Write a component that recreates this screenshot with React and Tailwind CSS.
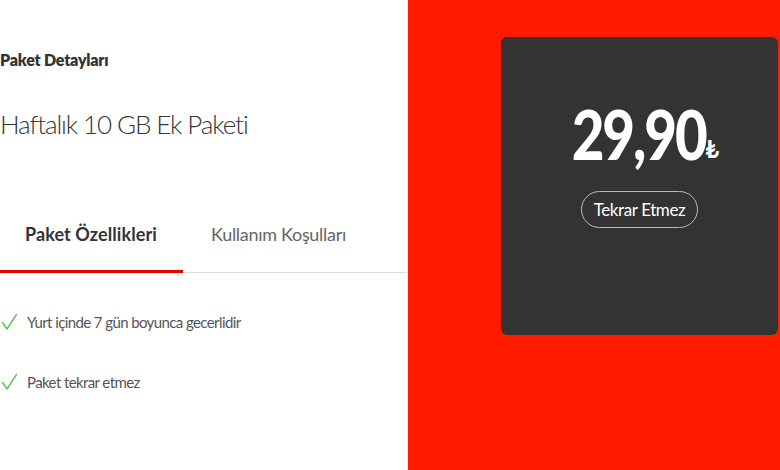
import React from 'react';

const Check = () => (
  <svg width="17" height="18" viewBox="0 0 17 18" fill="none" className="shrink-0">
    <path d="M1.5 9.5 L6 16 L15.5 1.5" stroke="#62c05a" strokeWidth="1.4" strokeLinecap="round" strokeLinejoin="round" />
  </svg>
);

const features = ['Yurt içinde 7 gün boyunca gecerlidir', 'Paket tekrar etmez'];

const App = () => {
  return (
    <div className="flex w-[780px] h-[470px] overflow-hidden bg-white" style={{ fontFamily: 'Lato, "Open Sans", sans-serif' }}>
      {/* Left: package details */}
      <div className="w-[408px] shrink-0 border-r border-[#eeeeee] flex flex-col">
        <div className="pt-[50px] text-[16px] font-extrabold text-[#333] tracking-[-0.2px] leading-5">Paket Detayları</div>
        <div className="mt-[38px] text-[26px] font-light text-[#333] tracking-[-1.1px] leading-8">Haftalık 10 GB Ek Paketi</div>

        <div className="mt-[82px] flex border-b border-[#dddddd]">
          <div className="w-[183px] pl-[25px] pb-[24px] border-b-[3px] border-[#e60000] -mb-px text-[18px] font-bold text-[#333] tracking-[0.1px] leading-6">
            Paket Özellikleri
          </div>
          <div className="pl-[28px] pb-[24px] text-[18px] text-[#666] tracking-[-0.3px] leading-6">Kullanım Koşulları</div>
        </div>

        <div className="mt-[39px] flex flex-col gap-[40px]">
          {features.map((f) => (
            <div key={f} className="flex items-center gap-[9px] pl-[1px]">
              <Check />
              <span className="text-[15px] text-[#555] tracking-[-0.6px] leading-5">{f}</span>
            </div>
          ))}
        </div>
      </div>

      {/* Right: price */}
      <div className="flex-1 bg-[#ff1a00] pt-[37px] pl-[93px] pr-[2px]">
        <div className="h-[298px] rounded-[6px] bg-[#333333] flex flex-col items-center pt-[64px]">
          <div className="flex items-end text-white pr-[2px]">
            <span className="text-[68px] font-black leading-[66px] tracking-[-2.5px] scale-x-[0.83]">29,90</span>
            <span className="text-[24px] font-bold leading-[24px] mb-[6px] -ml-[14px]">₺</span>
          </div>
          <div className="mt-[24px] h-[37px] px-[12px] flex items-center rounded-full border border-[#bbbbbb] text-white text-[17px] tracking-[-0.4px]">
            Tekrar Etmez
          </div>
        </div>
      </div>
    </div>
  );
};

export default App;
